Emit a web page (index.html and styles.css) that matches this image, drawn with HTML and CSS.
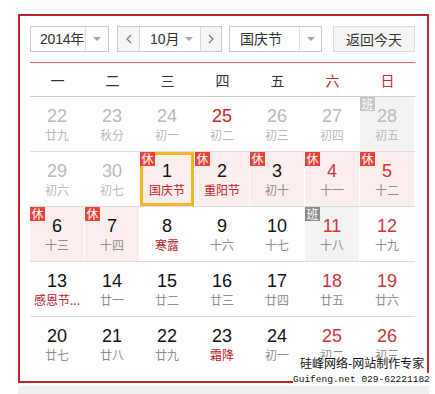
FILE: index.html
```html
<!DOCTYPE html>
<html lang="zh-CN">
<head>
<meta charset="utf-8">
<title>万年历</title>
<link rel="stylesheet" href="styles.css">
</head>
<body>
<div class="page">
  <div class="cal">
    <div class="toolbar">
      <div class="sel year">
        <span class="txt">2014年</span>
        <span class="arr"><i class="tri"></i></span>
      </div>
      <div class="sel month">
        <span class="nav prev"><svg width="6" height="10" viewBox="0 0 6 10"><polyline points="5,1 1,5 5,9" fill="none" stroke="#777" stroke-width="1.2"/></svg></span>
        <span class="mtxt">10月<i class="tri"></i></span>
        <span class="nav next"><svg width="6" height="10" viewBox="0 0 6 10"><polyline points="1,1 5,5 1,9" fill="none" stroke="#777" stroke-width="1.2"/></svg></span>
      </div>
      <div class="sel holiday">
        <span class="txt">国庆节</span>
        <span class="arr"><i class="tri"></i></span>
      </div>
      <button class="today-btn">返回今天</button>
    </div>
    <div class="divider"></div>
    <div class="week-head">
      <span>一</span><span>二</span><span>三</span><span>四</span><span>五</span><span class="we">六</span><span class="we">日</span>
    </div>

    <div class="row">
      <div class="cell other"><b>22</b><em>廿九</em></div>
      <div class="cell other"><b>23</b><em>秋分</em></div>
      <div class="cell other"><b>24</b><em>初一</em></div>
      <div class="cell other hl"><b>25</b><em>初二</em></div>
      <div class="cell other"><b>26</b><em>初三</em></div>
      <div class="cell other"><b>27</b><em>初四</em></div>
      <div class="cell other work"><i class="badge b-work dim">班</i><b>28</b><em>初五</em></div>
    </div>
    <div class="row">
      <div class="cell other"><b>29</b><em>初六</em></div>
      <div class="cell other"><b>30</b><em>初七</em></div>
      <div class="cell rest today fest"><i class="badge b-rest">休</i><b>1</b><em>国庆节</em></div>
      <div class="cell rest fest"><i class="badge b-rest">休</i><b>2</b><em>重阳节</em></div>
      <div class="cell rest"><i class="badge b-rest">休</i><b>3</b><em>初十</em></div>
      <div class="cell rest wk"><i class="badge b-rest">休</i><b>4</b><em>十一</em></div>
      <div class="cell rest wk"><i class="badge b-rest">休</i><b>5</b><em>十二</em></div>
    </div>
    <div class="row">
      <div class="cell rest"><i class="badge b-rest">休</i><b>6</b><em>十三</em></div>
      <div class="cell rest"><i class="badge b-rest">休</i><b>7</b><em>十四</em></div>
      <div class="cell fest"><b>8</b><em>寒露</em></div>
      <div class="cell"><b>9</b><em>十六</em></div>
      <div class="cell"><b>10</b><em>十七</em></div>
      <div class="cell work wk"><i class="badge b-work">班</i><b>11</b><em>十八</em></div>
      <div class="cell wk"><b>12</b><em>十九</em></div>
    </div>
    <div class="row">
      <div class="cell fest"><b>13</b><em>感恩节...</em></div>
      <div class="cell"><b>14</b><em>廿一</em></div>
      <div class="cell"><b>15</b><em>廿二</em></div>
      <div class="cell"><b>16</b><em>廿三</em></div>
      <div class="cell"><b>17</b><em>廿四</em></div>
      <div class="cell wk"><b>18</b><em>廿五</em></div>
      <div class="cell wk"><b>19</b><em>廿六</em></div>
    </div>
    <div class="row last">
      <div class="cell"><b>20</b><em>廿七</em></div>
      <div class="cell"><b>21</b><em>廿八</em></div>
      <div class="cell"><b>22</b><em>廿九</em></div>
      <div class="cell fest"><b>23</b><em>霜降</em></div>
      <div class="cell"><b>24</b><em>初一</em></div>
      <div class="cell wk"><b>25</b><em>初二</em></div>
      <div class="cell wk"><b>26</b><em>初三</em></div>
    </div>
  </div>
  <div class="band"></div>
  <div class="wm">
    <div class="wm1">硅峰网络-网站制作专家</div>
    <div class="wm2">Guifeng.net 029-62221182</div>
  </div>
</div>
</body>
</html>
```

FILE: styles.css
```css
html, body {
  margin: 0;
  background: #fff;
  font-family: "Liberation Sans", "Noto Sans CJK SC", sans-serif;
}

.page {
  position: relative;
  width: 411px;
  padding: 14px 0 0 18px;
}

.cal {
  box-sizing: border-box;
  width: 411px;
  height: 369px;
  border: 2px solid #c0262b;
  padding: 10px 12px 10px 10px;
}

/* toolbar */
.toolbar {
  display: flex;
  height: 26px;
}

.sel {
  box-sizing: border-box;
  display: flex;
  height: 26px;
  border: 1px solid #c9c9c9;
  background: #fff;
  font-size: 14px;
  color: #333;
  white-space: nowrap;
}

.sel .txt {
  box-sizing: border-box;
  padding-left: 10px;
  line-height: 24px;
  border-right: 1px solid #e1e1e1;
  white-space: nowrap;
}

.sel .arr {
  flex: 1;
  display: flex;
  align-items: center;
  justify-content: center;
}

.tri {
  display: inline-block;
  width: 0;
  height: 0;
  border-left: 4px solid transparent;
  border-right: 4px solid transparent;
  border-top: 4px solid #a5a5a5;
}

.year {
  width: 79px;
  margin-right: 8px;
}
.year .txt {
  width: 55px;
  padding-left: 9px;
  letter-spacing: -0.2px;
}

.month {
  width: 105px;
  margin-right: 7px;
}
.month .nav {
  display: flex;
  align-items: center;
  justify-content: center;
  background: #f6f6f6;
}
.month .prev {
  box-sizing: border-box;
  width: 22px;
  border-right: 1px solid #d5d5d5;
}
.month .next {
  flex: 1;
}
.month .mtxt {
  box-sizing: border-box;
  width: 61px;
  padding-left: 10px;
  line-height: 24px;
  border-right: 1px solid #d5d5d5;
  display: flex;
  align-items: center;
}
.month .mtxt .tri {
  margin-left: 5px;
}

.holiday {
  width: 93px;
  margin-right: 11px;
}
.holiday .txt { width: 70px; }

.today-btn {
  box-sizing: border-box;
  width: 82px;
  height: 26px;
  margin: 0;
  padding: 0;
  border: 1px solid #dadada;
  background: #f5f5f5;
  font-family: "Liberation Sans", "Noto Sans CJK SC", sans-serif;
  font-size: 14px;
  color: #333;
  white-space: nowrap;
}

.divider {
  height: 1px;
  margin-top: 10px;
  background: #e0665e;
}

/* weekday header */
.week-head {
  display: grid;
  grid-template-columns: repeat(7, 55px);
  height: 33px;
  align-items: center;
  border-bottom: 1px solid #cfcfcf;
  font-size: 14px;
  color: #333;
  text-align: center;
}
.week-head .we { color: #c7282e; }

/* day grid */
.row {
  display: grid;
  grid-template-columns: repeat(7, 55px);
  border-bottom: 1px solid #dcdcdc;
}
.row.last { border-bottom: 0; }

.cell {
  position: relative;
  box-sizing: border-box;
  height: 54px;
  padding-top: 9px;
  border-right: 1px solid #fff;
  text-align: center;
}
.cell b {
  display: block;
  font-weight: normal;
  font-size: 18px;
  line-height: 21px;
  color: #111;
  font-family: "Liberation Sans", Arial, sans-serif;
}
.cell em {
  display: block;
  font-style: normal;
  font-size: 12px;
  line-height: 16px;
  color: #8e8e8e;
  font-family: "Noto Sans CJK SC", sans-serif;
  white-space: nowrap;
}

.cell.other b,
.cell.other em { color: #b9b9b9; }
.cell.other.hl b { color: #c8242b; }
.cell.wk b { color: #d0353b; }
.cell.fest em { color: #be2229; }

.cell.rest { background: #fdeeee; }
.cell.work { background: #f3f3f3; }
.cell.today { box-shadow: inset 0 0 0 3px #f6b625; }

.badge {
  position: absolute;
  top: 0;
  left: 0;
  z-index: 1;
  width: 15px;
  height: 14px;
  font-style: normal;
  font-size: 12px;
  line-height: 14px;
  color: #fff;
  text-align: center;
  font-family: "Noto Sans CJK SC", sans-serif;
}
.b-rest { background: #e8443a; }
.b-work { background: #8d8d8d; }
.b-work.dim { background: #c4c4c4; }

.band {
  height: 8px;
  margin-top: 3px;
  background: #efefef;
}

/* watermark */
.wm {
  position: absolute;
  left: 293px;
  top: 355px;
  width: 142px;
  color: #111;
}
.wm1 {
  padding-left: 7px;
  font-size: 12px;
  line-height: 16px;
  font-family: "Noto Sans CJK SC", sans-serif;
  text-shadow: 0 0 2px #fff, 0 0 2px #fff, 0 0 2px #fff;
}
.wm2 {
  margin-top: 2px;
  font-size: 9.5px;
  line-height: 13px;
  font-family: "Liberation Mono", monospace;
  background: #fff;
  white-space: nowrap;
}
```
